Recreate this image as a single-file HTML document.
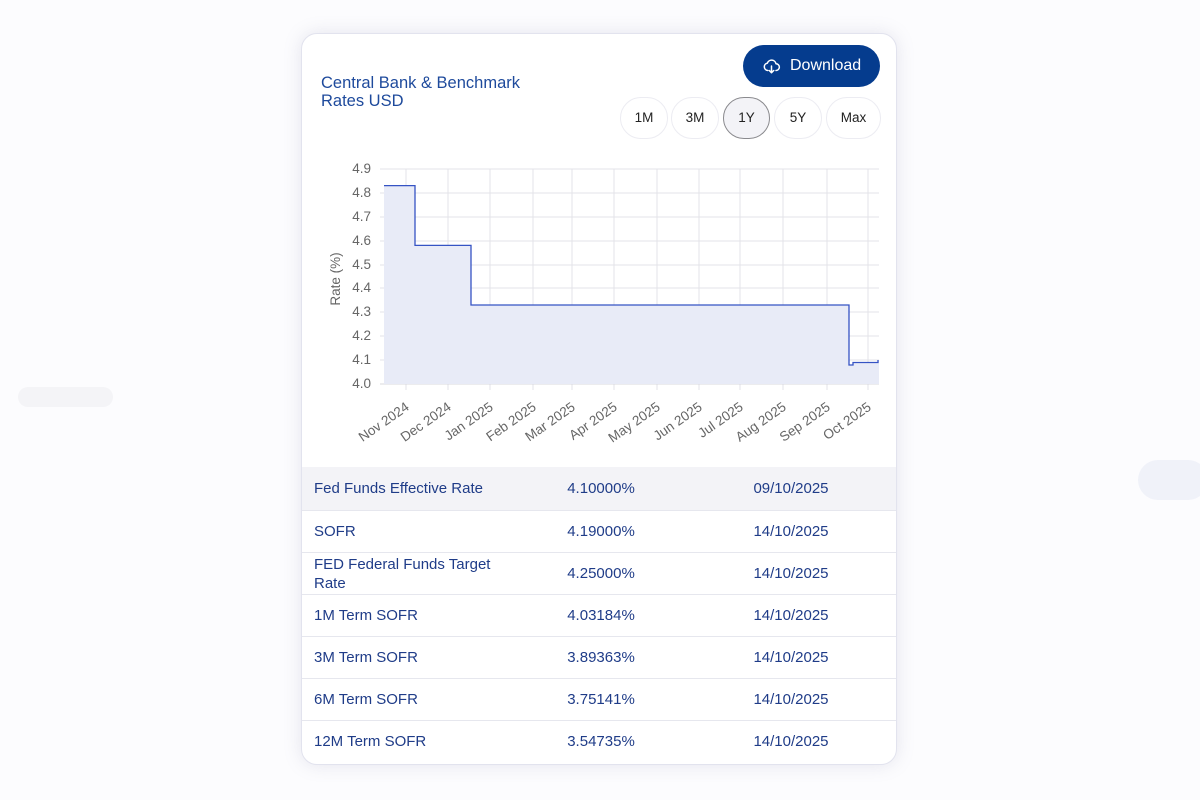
<!DOCTYPE html><html><head><style>
body{margin:0;width:1200px;height:800px;background:#fcfcfe;font-family:"Liberation Sans",sans-serif;position:relative;overflow:hidden}
.card{position:absolute;left:301px;top:33px;width:594px;height:730px;background:#fff;border:1px solid #e2e3ee;border-radius:16px;box-shadow:0 0 18px rgba(120,120,160,.18);overflow:hidden}
.title{position:absolute;left:19px;top:40px;color:#1e4a9c;font-size:16.5px;line-height:18px}
.dl{position:absolute;left:441px;top:11px;width:137px;height:42px;background:#053c8e;border-radius:21px;color:#fff;font-size:16px;line-height:42px}
.dl span{position:absolute;left:47px}
.pb{position:absolute;top:63px;height:40px;border:1px solid #ececf2;border-radius:21px;font-size:13.5px;line-height:40px;text-align:center;color:#222;background:#fff}
.pb.a{background:#f3f3f7;border:1px solid #8a8a8e}
table{position:absolute;left:0;top:433px;width:594px;border-collapse:collapse;font-size:15px;color:#1f3c88}
td{height:41px;border-top:1px solid #e6e7ee;padding:0}
td.n{padding-left:12px;width:220px;line-height:19px}
td.v{text-align:center;width:134px}
td.d{text-align:center;padding-left:18px}
tr.f td{background:#f3f3f7;border-top:none;height:43px}
.faint{position:absolute;background:#f4f4f7;border-radius:10px}
</style></head><body>
<div class="faint" style="left:18px;top:387px;width:95px;height:20px"></div>
<div class="faint" style="left:1138px;top:460px;width:70px;height:40px;background:#f0f2f9;border-radius:20px"></div>
<div class="card">
<div class="title">Central Bank &amp; Benchmark<br>Rates USD</div>
<div class="dl"><svg style="position:absolute;left:19px;top:12px" width="19" height="18" viewBox="0 0 24 24" fill="none" stroke="#fff" stroke-width="2" stroke-linecap="round" stroke-linejoin="round"><path d="M7 18a5 5 0 0 1-.5-9.9A6 6 0 0 1 18 9a4.5 4.5 0 0 1 0 9"/><path d="M12 12v9M9 18l3 3 3-3"/></svg><span>Download</span></div>
<div class="pb" style="left:318px;width:46px">1M</div>
<div class="pb" style="left:369px;width:46px">3M</div>
<div class="pb a" style="left:421px;width:45px">1Y</div>
<div class="pb" style="left:472px;width:46px">5Y</div>
<div class="pb" style="left:524px;width:53px">Max</div>
<svg style="position:absolute;left:0;top:0" width="594" height="430" font-family="Liberation Sans" font-size="13.5" fill="#666">
<g stroke="#e3e3e8" stroke-width="1">
<line x1="78" x2="577" y1="135" y2="135"/><line x1="78" x2="577" y1="159" y2="159"/><line x1="78" x2="577" y1="183" y2="183"/><line x1="78" x2="577" y1="207" y2="207"/><line x1="78" x2="577" y1="231" y2="231"/><line x1="78" x2="577" y1="254" y2="254"/><line x1="78" x2="577" y1="278" y2="278"/><line x1="78" x2="577" y1="302" y2="302"/><line x1="78" x2="577" y1="326" y2="326"/>
<g><line x1="104" x2="104" y1="135" y2="356"/><line x1="146" x2="146" y1="135" y2="356"/><line x1="188" x2="188" y1="135" y2="356"/><line x1="231" x2="231" y1="135" y2="356"/><line x1="270" x2="270" y1="135" y2="356"/><line x1="312" x2="312" y1="135" y2="356"/><line x1="355" x2="355" y1="135" y2="356"/><line x1="397" x2="397" y1="135" y2="356"/><line x1="438" x2="438" y1="135" y2="356"/><line x1="481" x2="481" y1="135" y2="356"/><line x1="525" x2="525" y1="135" y2="356"/><line x1="566" x2="566" y1="135" y2="356"/></g>
<line x1="78" x2="577" y1="350" y2="350" stroke="#d8d8de"/>
</g>
<path d="M82 151.6H113V211.4H169V271H547V331H551V328.5H576V326L577 326V350H82Z" fill="#e8ebf7"/>
<path d="M82 151.6H113V211.4H169V271H547V331H551V328.5H576V326" fill="none" stroke="#3553c4" stroke-width="1.3"/>
<g text-anchor="end"><text x="69" y="139">4.9</text><text x="69" y="163">4.8</text><text x="69" y="187">4.7</text><text x="69" y="211">4.6</text><text x="69" y="235">4.5</text><text x="69" y="258">4.4</text><text x="69" y="282">4.3</text><text x="69" y="306">4.2</text><text x="69" y="330">4.1</text><text x="69" y="354">4.0</text></g>
<text transform="translate(38,245) rotate(-90)" text-anchor="middle">Rate (%)</text>
<g text-anchor="end">
<text transform="translate(108,375) rotate(-35)">Nov 2024</text>
<text transform="translate(150,375) rotate(-35)">Dec 2024</text>
<text transform="translate(192,375) rotate(-35)">Jan 2025</text>
<text transform="translate(235,375) rotate(-35)">Feb 2025</text>
<text transform="translate(274,375) rotate(-35)">Mar 2025</text>
<text transform="translate(316,375) rotate(-35)">Apr 2025</text>
<text transform="translate(359,375) rotate(-35)">May 2025</text>
<text transform="translate(401,375) rotate(-35)">Jun 2025</text>
<text transform="translate(442,375) rotate(-35)">Jul 2025</text>
<text transform="translate(485,375) rotate(-35)">Aug 2025</text>
<text transform="translate(529,375) rotate(-35)">Sep 2025</text>
<text transform="translate(570,375) rotate(-35)">Oct 2025</text>
</g>
</svg>
<table>
<tr class="f"><td class="n">Fed Funds Effective Rate</td><td class="v">4.10000%</td><td class="d">09/10/2025</td></tr>
<tr><td class="n">SOFR</td><td class="v">4.19000%</td><td class="d">14/10/2025</td></tr>
<tr><td class="n">FED Federal Funds Target<br>Rate</td><td class="v">4.25000%</td><td class="d">14/10/2025</td></tr>
<tr><td class="n">1M Term SOFR</td><td class="v">4.03184%</td><td class="d">14/10/2025</td></tr>
<tr><td class="n">3M Term SOFR</td><td class="v">3.89363%</td><td class="d">14/10/2025</td></tr>
<tr><td class="n">6M Term SOFR</td><td class="v">3.75141%</td><td class="d">14/10/2025</td></tr>
<tr><td class="n">12M Term SOFR</td><td class="v">3.54735%</td><td class="d">14/10/2025</td></tr>
</table>
</div>
</body></html>
